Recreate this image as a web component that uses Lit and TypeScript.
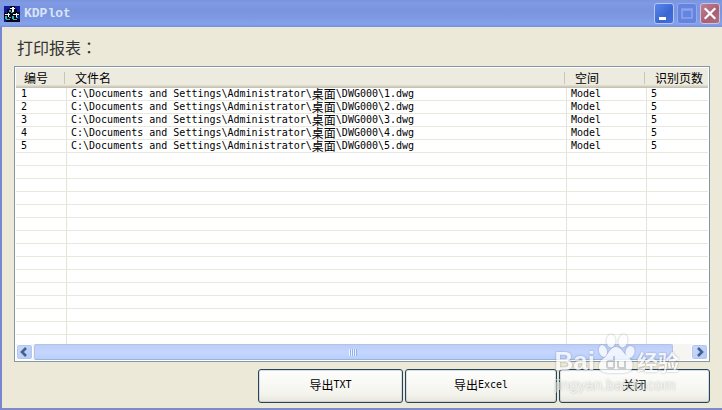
import { LitElement, html, css, svg } from "lit";
import { customElement } from "lit/decorators.js";

interface Sheet {
  id: number;
  file: string;
  space: string;
  pages: number;
}

const FOLDER = ["C:\\Documents and Settings\\Administrator\\", "桌面", "\\DWG000\\"];
const SHEETS: Sheet[] = [1, 2, 3, 4, 5].map((n) => ({
  id: n,
  file: `${n}.dwg`,
  space: "Model",
  pages: 5,
}));
const EMPTY_ROWS = Array.from({ length: 14 });

@customElement("kd-titlebar")
class KdTitlebar extends LitElement {
  static styles = css`
    :host {
      display: flex;
      align-items: center;
      height: 27px;
      box-sizing: border-box;
      padding: 0 2px 0 4px;
      background: linear-gradient(#7a93dc 0, #7f9be4 3px, #7a95de 10px, #7d99e2 18px, #85a3ec 24px, #7690da 27px);
    }
    svg {
      display: block;
    }
    h1 {
      flex: 1;
      margin: 0 0 0 4px;
      font: bold 13px/16px "Liberation Mono", monospace;
      color: #d8e4f8;
    }
    .controls {
      display: flex;
      gap: 3px;
    }
    button {
      width: 20px;
      height: 21px;
      padding: 0;
      border: 1px solid #b4c6f2;
      border-radius: 3px;
      background: linear-gradient(135deg, #5c86e8, #3a66d4 60%, #4470dc);
    }
    button svg {
      width: 18px;
      height: 19px;
    }
    .max {
      border-color: #93aaec;
      background: #6584de;
    }
    .close {
      border-color: #cdc4e0;
      background: linear-gradient(135deg, #bd7f94, #a95f72 60%, #b0707f);
    }
  `;
  render() {
    return html`
      <svg width="16" height="16" viewBox="0 0 16 16" aria-hidden="true">
        <rect width="16" height="16" fill="#05060f" />
        <path d="M0 0h6v3H3v4H0zM11 0h5v6h-3V3h-2zM0 13h2v3H0zM13 9h3v4h-3z" fill="#10189e" />
        <path d="M6 2h5v1H6zM8 1h2v5H8zM1 8h5v1H1zM4 7h1v4H4zM9 8h6v1H9zM12 7h1v4h-1z" fill="#f4fbff" />
        <path d="M5 4h2v2H5zM7 6h2v1H7zM1 10h2v3H1zM2 13h4v1H2zM5 11h2v1H5zM8 10h2v3H8zM9 13h4v1H9zM12 11h2v1h-2z" fill="#36b3b8" />
      </svg>
      <h1>KDPlot</h1>
      <div class="controls">
        <button type="button" class="min" aria-label="最小化">
          <svg viewBox="0 0 18 19"><rect x="4" y="13" width="7" height="3" fill="#fff" /></svg>
        </button>
        <button type="button" class="max" aria-label="最大化" disabled>
          <svg viewBox="0 0 18 19">
            <path d="M4 5h10v9H4zM4 6h10" fill="none" stroke="#8ba3ee" stroke-width="1.6" />
          </svg>
        </button>
        <button type="button" class="close" aria-label="关闭窗口">
          <svg viewBox="0 0 18 19">
            <path d="M4.5 5l9 9M13.5 5l-9 9" stroke="#fff" stroke-width="2.2" stroke-linecap="square" />
          </svg>
        </button>
      </div>
    `;
  }
}

@customElement("kd-scrollbar")
class KdScrollbar extends LitElement {
  static styles = css`
    :host {
      display: flex;
      align-items: stretch;
      gap: 1px;
      height: 16px;
      background: #f6f5f1;
    }
    button {
      width: 17px;
      padding: 0;
      border: 1px solid #fff;
      border-radius: 3px;
      background: linear-gradient(135deg, #cbdafb, #b4c8f4);
      box-shadow: inset 0 0 0 1px #b3c6ee;
    }
    svg {
      display: block;
      width: 15px;
      height: 14px;
    }
    .track {
      flex: 1;
      display: flex;
    }
    .thumb {
      width: 97.4%;
      display: flex;
      align-items: center;
      justify-content: center;
      box-sizing: border-box;
      border: 1px solid #b4c3e4;
      border-bottom-color: #9ab4dc;
      border-radius: 2px;
      background: linear-gradient(#bccdf6, #c4d6ff 50%, #b9cffb);
    }
    .grip {
      width: 8px;
      height: 7px;
      background: repeating-linear-gradient(90deg, #eef4fe 0 1px, #8cb0f0 1px 2px);
    }
  `;
  render() {
    const arrow = (d: string) => svg`<path d=${d} fill="none" stroke="#43608f" stroke-width="2.6" />`;
    return html`
      <button type="button" aria-label="向左滚动">
        <svg viewBox="0 0 15 14">${arrow("M9 3L5 7l4 4")}</svg>
      </button>
      <div class="track"><div class="thumb"><div class="grip"></div></div></div>
      <button type="button" aria-label="向右滚动">
        <svg viewBox="0 0 15 14">${arrow("M6 3l4 4-4 4")}</svg>
      </button>
    `;
  }
}

@customElement("kd-watermark")
class KdWatermark extends LitElement {
  static styles = css`
    :host {
      display: block;
      color: #fff;
      opacity: 0.75;
      pointer-events: none;
      white-space: nowrap;
      filter: drop-shadow(0 0 1px rgba(90, 90, 90, 0.6));
    }
    .brand {
      display: flex;
      align-items: flex-end;
      margin-bottom: 2px;
      font: bold 26px/26px "Liberation Sans", sans-serif;
    }
    svg {
      display: block;
      width: 42px;
      height: 42px;
    }
    .cn {
      font: bold 21px/26px "Noto Sans CJK SC", sans-serif;
    }
    .site {
      font: 15px/18px "Liberation Sans", sans-serif;
      color: #f4f4f2;
      opacity: 0.8;
    }
  `;
  render() {
    return html`
      <div class="brand">
        <span>Bai</span>
        <svg viewBox="0 0 42 42" aria-hidden="true">
          <ellipse cx="8" cy="19" rx="4" ry="6" transform="rotate(-15 8 19)" fill="#fff" />
          <ellipse cx="16" cy="9" rx="4.5" ry="6.5" fill="#fff" />
          <ellipse cx="28" cy="9" rx="4.5" ry="6.5" transform="rotate(10 28 9)" fill="#fff" />
          <ellipse cx="35" cy="20" rx="4.5" ry="6" transform="rotate(15 35 20)" fill="#fff" />
          <path d="M21 15c5 0 7 6 12 10 4 3 6 7 4 12-2 4-8 4-14 4S9 42 5 38c-3-4 0-9 4-12 5-4 6-11 12-11z" fill="#fff" />
          <path d="M19 24v12M19 29h-5q-2 0-2 2v3q0 2 2 2h5M23 29v5q0 2 2 2h5v-7" fill="none" stroke="#bcc4d0" stroke-width="2" />
        </svg>
        <span class="cn">经验</span>
      </div>
      <div class="site">jingyan.baidu.com</div>
    `;
  }
}

@customElement("app-root")
class AppRoot extends LitElement {
  static styles = css`
    :host {
      display: block;
      color: #000;
      font: 10px/12px "DejaVu Sans Mono", "Noto Sans CJK SC", monospace;
    }
    .cjk {
      font-family: "Noto Sans CJK SC", sans-serif;
      font-size: 12px;
      line-height: 12px;
    }
    main {
      position: relative;
      padding: 8px 12px 5px 12px;
      background: #ece9d8;
      border-left: 2px solid #7885cf;
      border-bottom: 2px solid #7f8bc8;
    }
    h2 {
      margin: 0 0 7px 3px;
      font: 16px/24px "Noto Sans CJK SC", sans-serif;
      color: #333;
    }
    .colon {
      font-family: "Noto Sans CJK TC", sans-serif;
    }
    .list {
      padding: 1px;
      border: 1px solid #8397a6;
      background: #fff;
    }
    table {
      width: 100%;
      table-layout: fixed;
      border-collapse: separate;
      border-spacing: 0;
    }
    .id {
      width: 51px;
    }
    .space {
      width: 80px;
    }
    .pages {
      width: 61px;
    }
    th,
    td {
      box-sizing: border-box;
      padding: 0;
      text-align: left;
      font-weight: normal;
      white-space: nowrap;
    }
    th {
      height: 20px;
      padding-left: 8px;
      background: linear-gradient(#edebdf 0 17px, #dfdccc 17px 18px, #d3d0c0 18px 19px, #c6c3b4 19px);
    }
    .split {
      display: flex;
      align-items: center;
      height: 12px;
      margin-right: 2px;
      border-right: 1px solid #c9c6b6;
    }
    td {
      height: 13px;
      padding-left: 4px;
      border-right: 1px solid #e6e4d8;
      border-bottom: 1px solid #e9e8de;
      line-height: 12px;
    }
    td:first-child {
      padding-left: 5px;
    }
    td:last-child {
      border-right: 0;
    }
    .line {
      display: flex;
      height: 12px;
      white-space: pre;
    }
    .line .cjk {
      line-height: 11px;
    }
    .rest td {
      height: 9px;
      border-bottom: 0;
    }
    .actions {
      display: grid;
      grid-template-columns: 145px 152px 151px;
      justify-content: end;
      gap: 2px;
      margin-top: 7px;
    }
    .actions button {
      display: flex;
      align-items: center;
      justify-content: center;
      height: 34px;
      padding: 0 0 3px;
      border: 1px solid #24455c;
      border-radius: 3px;
      background: linear-gradient(#fdfdfc, #f4f4ee 75%, #e6e5dc);
      box-shadow: inset 0 0 0 1px rgba(120, 140, 150, 0.25);
      color: #000;
      font: inherit;
    }
    kd-watermark {
      position: absolute;
      right: 43px;
      bottom: 14px;
    }
  `;
  render() {
    return html`
      <kd-titlebar></kd-titlebar>
      <main>
        <h2>打印报表<span class="colon" lang="zh-TW">：</span></h2>
        <div class="list">
          <table>
            <thead>
              <tr>
                <th class="id"><div class="split cjk">编号</div></th>
                <th><div class="split cjk">文件名</div></th>
                <th class="space"><div class="split cjk">空间</div></th>
                <th class="pages cjk">识别页数</th>
              </tr>
            </thead>
            <tbody>
              ${SHEETS.map(
                (s) => html`<tr>
                  <td>${s.id}</td>
                  <td><div class="line"><span>${FOLDER[0]}</span><span class="cjk">${FOLDER[1]}</span><span>${FOLDER[2]}${s.file}</span></div></td>
                  <td>${s.space}</td>
                  <td>${s.pages}</td>
                </tr>`
              )}
              ${EMPTY_ROWS.map(() => html`<tr><td></td><td></td><td></td><td></td></tr>`)}
              <tr class="rest"><td></td><td></td><td></td><td></td></tr>
            </tbody>
          </table>
          <kd-scrollbar></kd-scrollbar>
        </div>
        <div class="actions">
          <button type="button"><span class="cjk">导出</span>TXT</button>
          <button type="button"><span class="cjk">导出</span>Excel</button>
          <button type="button"><span class="cjk">关闭</span></button>
        </div>
        <kd-watermark></kd-watermark>
      </main>
    `;
  }
}
